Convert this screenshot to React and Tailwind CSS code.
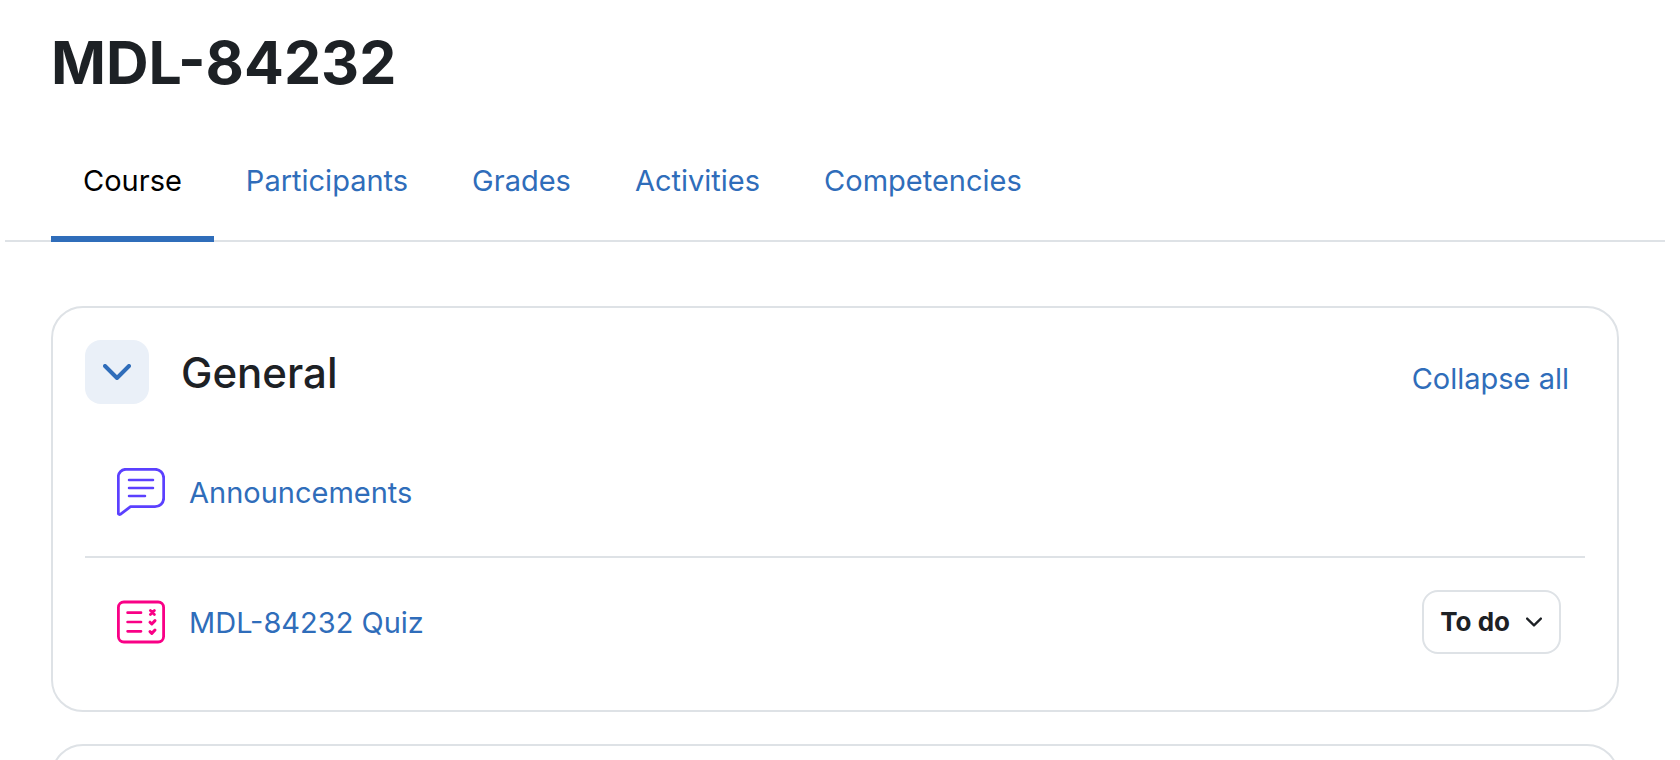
import { useState } from 'react';

const tabs = ['Course', 'Participants', 'Grades', 'Activities', 'Competencies'];

const Chevron = ({ className, strokeWidth }) => (
  <svg viewBox="0 0 28 16" className={className} fill="none" aria-hidden="true">
    <path
      d="M2 2L14 14L26 2"
      stroke="currentColor"
      strokeWidth={strokeWidth}
      strokeLinecap="round"
      strokeLinejoin="round"
    />
  </svg>
);

const ForumIcon = () => (
  <svg viewBox="0 0 48 48" className="w-12 h-12" fill="none" stroke="#5b40ff" strokeLinecap="round" aria-hidden="true">
    <path
      d="M9 1.3H38A8.7 8.7 0 0 1 46.7 10V30A8.7 8.7 0 0 1 38 38.7H13.5L3.3 46.3A1.3 1.3 0 0 1 1.3 45.3V9A7.7 7.7 0 0 1 9 1.3Z"
      strokeWidth="2.8"
      strokeLinejoin="round"
    />
    <path d="M12 12H36M12 20H36M12 28H28" strokeWidth="2.5" />
  </svg>
);

const QuizIcon = () => (
  <svg viewBox="0 0 48 48" className="w-12 h-12" fill="none" stroke="#f90086" strokeLinecap="round" aria-hidden="true">
    <rect x="1.4" y="4" width="45.2" height="40" rx="5.5" strokeWidth="2.8" />
    <path d="M10.6 14.7H24M10.6 24H24M10.6 33.3H24" strokeWidth="2.7" />
    <path d="M33.4 12.4L37.4 16.4M37.4 12.4L33.4 16.4" strokeWidth="2.8" />
    <path
      d="M33 24.2L34.8 26L38 22.6M33 33.6L34.8 35.4L38 32"
      strokeWidth="3"
      strokeLinejoin="round"
    />
  </svg>
);

const App = () => {
  const [activeTab, setActiveTab] = useState('Course');
  const [open, setOpen] = useState(true);

  return (
    <div className="h-screen overflow-hidden bg-white font-['Inter',sans-serif] text-[29px] leading-[48px] text-[#1d2125]">
      <header className="pl-[51px] pt-[23px]">
        <h1 className="text-[59px] leading-[80px] font-bold">MDL-84232</h1>
      </header>

      <nav className="ml-[5px] mr-[15px] mt-7 pl-[46px] border-b-2 border-[#dee2e6]">
        <ul className="flex -mb-[2px]">
          {tabs.map((tab) => (
            <li key={tab}>
              <a
                href="#"
                onClick={() => setActiveTab(tab)}
                className={`block px-8 pt-[26px] pb-[31px] border-b-6 ${
                  activeTab === tab ? 'text-black border-[#2f6dba]' : 'text-[#2f6dba] border-transparent'
                }`}
              >
                {tab}
              </a>
            </li>
          ))}
        </ul>
      </nav>

      <main className="mt-16 ml-[51px] mr-[61px] flex flex-col gap-8">
        <section className="border-2 border-[#dee2e6] rounded-[32px] px-8 pt-8 pb-6">
          <div className="flex items-center">
            <button
              onClick={() => setOpen(!open)}
              aria-label="Toggle General"
              className="w-16 h-16 rounded-2xl bg-[#eaf0f8] text-[#2f6dba] flex items-center justify-center"
            >
              <Chevron className="w-7 h-4" strokeWidth="4" />
            </button>
            <h2 className="ml-8 pt-0.5 text-[42px] leading-[56px] font-medium">General</h2>
            <a href="#" className="ml-auto mr-4 mt-3.5 text-[#2f6dba]">
              Collapse all
            </a>
          </div>

          {open && (
            <ul>
              <li className="flex items-center h-[154px] pt-6 pl-8 border-b-2 border-[#dee2e6]">
                <ForumIcon />
                <a href="#" className="ml-6 pt-0.5 text-[#2f6dba]">
                  Announcements
                </a>
              </li>
              <li className="flex items-center h-32 pl-8 pr-6">
                <QuizIcon />
                <a href="#" className="ml-6 pt-0.5 text-[#2f6dba]">
                  MDL-84232 Quiz
                </a>
                <button className="ml-auto h-16 pl-4 pr-[17px] flex items-center gap-4 border-2 border-[#dee2e6] rounded-2xl text-[26px] font-bold">
                  To do
                  <Chevron className="w-4 h-[10px]" strokeWidth="4" />
                </button>
              </li>
            </ul>
          )}
        </section>

        <section className="h-40 border-2 border-[#dee2e6] rounded-[32px]" />
      </main>
    </div>
  );
};

export default App;
